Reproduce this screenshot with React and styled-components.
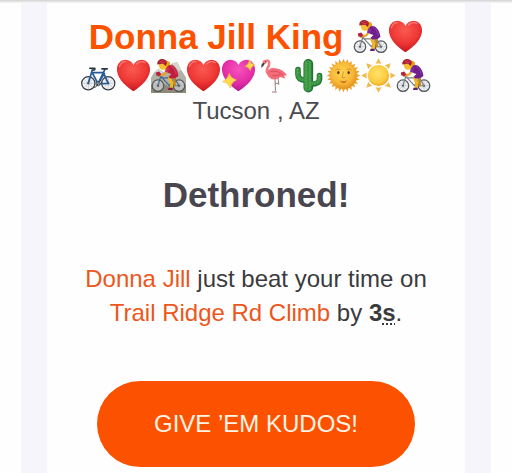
import React from 'react';
import styled, { createGlobalStyle } from 'styled-components';

const GlobalStyle = createGlobalStyle`
	body {
		margin: 0;
		background: #fefefe;
		font-family: 'Liberation Sans', Arial, sans-serif;
	}
`;

const Emoji = ({ label, children }) => (
	<EmojiSvg viewBox='0 0 36 36' role='img' aria-label={label}>
		{children}
	</EmojiSvg>
);

const heartPath =
	'M18 34.2C14 31.5 1 22.6 1 11.7C1 5.8 5 1.8 9.8 1.8C13.6 1.8 16.6 4 18 7.2C19.4 4 22.4 1.8 26.2 1.8C31 1.8 35 5.8 35 11.7C35 22.6 22 31.5 18 34.2Z';

const Heart = () => (
	<Emoji label='red heart'>
		<defs>
			<radialGradient id='heart' cx='0.48' cy='0.3' r='0.68'>
				<stop offset='0' stopColor='#fb5a50' />
				<stop offset='0.6' stopColor='#ee3835' />
				<stop offset='1' stopColor='#c91820' />
			</radialGradient>
		</defs>
		<path d={heartPath} fill='url(#heart)' />
		<path d='M3.5 9C4.5 5.2 7 3.6 10 3.7M21 6.2C23 3.8 27 3 30 4.8' stroke='#ff9a90' strokeWidth='1.2' strokeLinecap='round' fill='none' opacity='0.7' />
	</Emoji>
);

const SparkHeart = () => (
	<Emoji label='sparkling heart'>
		<defs>
			<radialGradient id='pinkHeart' cx='0.5' cy='0.3' r='0.68'>
				<stop offset='0' stopColor='#f653bd' />
				<stop offset='0.65' stopColor='#e32da5' />
				<stop offset='1' stopColor='#b9189b' />
			</radialGradient>
		</defs>
		<path d={heartPath} fill='url(#pinkHeart)' />
		<path d='M8.5 15.5Q10 21 16 22.5Q11 24.5 9.5 31Q7.5 25.5 1.5 24.5Q7 22 8.5 15.5Z' fill='#ffd84e' stroke='#f6b53d' strokeWidth='0.5' />
		<path d='M29.3 2Q30.5 6 35 7Q31 8.5 30.2 13Q28.5 9.2 24.5 8.5Q28.5 6.7 29.3 2Z' fill='#ffd84e' stroke='#f6b53d' strokeWidth='0.5' />
	</Emoji>
);

const Wheel = ({ x, y, r, rim }) => (
	<g>
		<circle cx={x} cy={y} r={r} fill='#e9edf0' fillOpacity='0.6' stroke={rim} strokeWidth='1.3' />
		<path
			d={`M${x - r} ${y}H${x + r}M${x} ${y - r}V${y + r}M${x - 4} ${y - 4}L${x + 4} ${y + 4}M${x - 4} ${y + 4}L${x + 4} ${y - 4}`}
			stroke='#929aa2'
			strokeWidth='0.45'
		/>
		<circle cx={x} cy={y} r='1.1' fill='#4c5158' />
	</g>
);

const Bicycle = () => (
	<Emoji label='bicycle'>
		<Wheel x={7.5} y={26} r={6.8} rim='#343b43' />
		<Wheel x={28} y={26} r={6.8} rim='#343b43' />
		<g fill='none' stroke='#285b96' strokeWidth='1.8' strokeLinecap='round' strokeLinejoin='round'>
			<path d='M28 26L23 15H11.5L17.5 26.5L24 16M17.5 26.5L28 26M7.5 26L12 11' />
			<path d='M17.5 26.5L24.5 12' />
		</g>
		<path d='M9 10.5H14Q15 12 13 12.5M21.5 11.2H27' fill='none' stroke='#31363c' strokeWidth='1.7' strokeLinecap='round' />
		<circle cx='17.5' cy='26.5' r='2.2' fill='#89919a' stroke='#333b43' strokeWidth='0.7' />
		<path d='M17.5 26.5L15 30H13.3' fill='none' stroke='#333b43' strokeWidth='1' />
	</Emoji>
);

const Cyclist = ({ mountain }) => (
	<Emoji label={mountain ? 'woman mountain biking' : 'woman biking'}>
		{mountain && (
			<g>
				<path d='M0 36V20L4 14L8 11L13 15L21 6L27 4L31 12L36 20V36Z' fill='#b3b0a6' />
				<path d='M22 6L27 4L31 12L29 14L26 10ZM4 14L8 11L12 15L8 19Z' fill='#d8d6cf' />
				<path d='M0 27L8 24L18 29L27 24L36 28V36H0Z' fill='#8f8a78' />
			</g>
		)}
		<Wheel x={7.2} y={28.5} r={5.9} rim='#50545b' />
		<Wheel x={28.8} y={28.5} r={5.9} rim='#50545b' />
		<path
			d='M7.2 28.5L10 19L19 28.5L24 20L28.8 28.5H19M10.5 20.5H23M7 18.5H12'
			fill='none'
			stroke={mountain ? '#42688b' : '#7b7e85'}
			strokeWidth='1.2'
		/>
		<path d='M24 18L24 25L25 29' fill='none' stroke='#c98618' strokeWidth='2.4' strokeLinejoin='round' />
		<path d='M22.5 17.5L19.2 20.5L21.5 26L20.8 31' fill='none' stroke='#f3b625' strokeWidth='3.2' strokeLinejoin='round' />
		<path d='M13 3Q17 1.5 19.5 4.5Q20.5 8 18.5 12L15.5 13L13.5 10Z' fill='#e6a11f' />
		<path d='M8 6H14.5L15.5 9.5Q14.5 12.5 11.5 12Q8.8 11.5 8.3 9Z' fill='#f9bf32' />
		<path d='M17 8.5Q20 6 23.5 8.5Q27.5 12 28.2 18.5Q25 21.5 20 21L18 19.5L21 16.5Q17 15.5 15.5 12.5Z' fill={mountain ? '#c01e40' : '#70208c'} />
		<path d='M20 8Q25 10 26 17' fill='none' stroke={mountain ? '#df4059' : '#913cab'} strokeWidth='1' />
		<path d='M16.5 13L13.5 17L8.5 18' fill='none' stroke='#e7a322' strokeWidth='2.2' strokeLinecap='round' strokeLinejoin='round' />
		<path d='M17.5 10L15.8 14.5' stroke={mountain ? '#d9304e' : '#842ba2'} strokeWidth='3.2' />
		<path d='M6.5 6.8Q6 2.2 10.5 1Q15.5 0.5 16.5 5L15 8.2L12.5 6Z' fill='#a81d2c' />
		<path d='M8.5 4L13 2.3M9.5 5.3L14.8 4' stroke='#e2545c' strokeWidth='0.7' />
		<path d='M5 15L8.5 14L10.5 16.5L9 18.5L5.5 18Z' fill='#b7203e' />
		<path d='M18 30.5H22.3V33H17.5Z' fill={mountain ? '#8c1737' : '#601e72'} />
	</Emoji>
);

const Flamingo = () => (
	<Emoji label='flamingo'>
		<path d='M19.5 20L20 34M22.5 20L23.5 27L19.8 25.5M16.5 35H21.5' fill='none' stroke='#8d6466' strokeWidth='0.9' />
		<path d='M8.5 4.5Q12.5 0.5 13.5 4.5Q14 8 11.5 11Q10 16 15 17' fill='none' stroke='#f27a83' strokeWidth='2.6' strokeLinecap='round' />
		<path d='M11 15Q13 9.5 20 10.5Q28 11.5 32 18L29 18L30 21L25 19.5Q18 25 12.5 19Z' fill='#f36d79' />
		<path d='M15 14Q22 12 28 18M17 18Q22 19 25 17' fill='none' stroke='#d94b60' strokeWidth='1' />
		<path d='M6.5 3.5Q8.5 0.8 11.5 2.5L10.5 6L7.5 6.5Z' fill='#f58a8e' />
		<path d='M8 4.5Q5 5.5 5.5 10Q8 8.5 9 6Z' fill='#4b4142' />
		<circle cx='9.8' cy='3.8' r='0.6' fill='#382c2d' />
	</Emoji>
);

const Cactus = () => (
	<Emoji label='cactus'>
		<g fill='none' strokeLinecap='round' strokeLinejoin='round'>
			<path d='M7.2 12V17Q7.2 23 16 23M29.3 18V22Q29 27 20 27' stroke='#207238' strokeWidth='5.8' />
			<path d='M17.8 6V30.5' stroke='#207238' strokeWidth='10' />
			<path d='M7 12V17Q7 22 14 22.5M29 18V22Q29 26 21 26' stroke='#3f9a45' strokeWidth='3.8' />
			<path d='M17.3 6V30.5' stroke='#3f9a45' strokeWidth='7.4' />
			<path d='M15.5 5V32M19.5 4V32M7 12V17M29 18V22' stroke='#7fc45d' strokeWidth='0.7' strokeDasharray='0.5 2.5' />
			<path d='M17.8 4V32' stroke='#24783a' strokeWidth='0.6' strokeDasharray='1 2' />
		</g>
	</Emoji>
);

const angles = count => Array.from({ length: count }, (_, i) => (i * 360) / count);

const SunFace = () => (
	<Emoji label='sun with face'>
		<defs>
			<radialGradient id='face' cx='0.45' cy='0.4' r='0.62'>
				<stop offset='0' stopColor='#ffd552' />
				<stop offset='0.65' stopColor='#f8b838' />
				<stop offset='1' stopColor='#e3901c' />
			</radialGradient>
		</defs>
		{angles(24).map(a => (
			<path key={a} d='M16 5.5L18 0.8L20.2 5.5Z' fill='#f0a32a' transform={`rotate(${a} 18 18)`} />
		))}
		<circle cx='18' cy='18' r='13.7' fill='url(#face)' />
		<ellipse cx='12.7' cy='15' rx='1.2' ry='1.6' fill='#5c3513' />
		<ellipse cx='23.3' cy='15' rx='1.2' ry='1.6' fill='#5c3513' />
		<path d='M9.7 12.5Q12 10 15 12.3M21 12.3Q24 10 26.3 12.5M18 14L16.5 20Q18 21 19.5 20' fill='none' stroke='#d98b19' strokeWidth='0.9' />
		<path d='M14 23.2Q18 24.5 22 23.2Q20 26 18 26Q16 26 14 23.2Z' fill='#cf7424' />
	</Emoji>
);

const Sun = () => (
	<Emoji label='sun'>
		<defs>
			<radialGradient id='sun' cx='0.45' cy='0.4' r='0.62'>
				<stop offset='0' stopColor='#ffe36c' />
				<stop offset='0.7' stopColor='#fbcb3e' />
				<stop offset='1' stopColor='#e9a42a' />
			</radialGradient>
		</defs>
		{angles(8).map(a => (
			<path key={a} d='M15 6L18 0.3L21 6Q18 5 15 6Z' fill='#f2b848' transform={`rotate(${a} 18 18)`} />
		))}
		<circle cx='18' cy='18' r='10.9' fill='url(#sun)' />
	</Emoji>
);

export default function App() {
	return (
		<Page>
			<GlobalStyle />
			<TopEdge />
			<Backdrop>
				<Card>
					<Name>
						Donna Jill King <Cyclist />
						<Heart />
						<Bicycle />
						<Heart />
						<Cyclist mountain />
						<Heart />
						<SparkHeart />
						<Flamingo />
						<Cactus />
						<SunFace />
						<Sun />
						<Cyclist />
					</Name>
					<Location>Tucson , AZ</Location>
					<Title>Dethroned!</Title>
					<Message>
						<TextLink href='#athlete'>Donna Jill</TextLink> just beat your time on{' '}
						<TextLink href='#segment'>Trail Ridge Rd Climb</TextLink> by{' '}
						<strong>
							3<Unit title='seconds'>s</Unit>
						</strong>
						.
					</Message>
					<KudosButton type='button'>GIVE ’EM KUDOS!</KudosButton>
				</Card>
			</Backdrop>
		</Page>
	);
}

const Page = styled.div`
	display: flex;
	flex-direction: column;
	min-height: 100vh;
`;

const TopEdge = styled.div`
	height: 3px;
	background: linear-gradient(#d2d2d2, #f8f8f9);
`;

const Backdrop = styled.main`
	display: flex;
	flex: 1;
	margin: 0 21px;
	padding: 0 26px;
	background: #f5f5fb;
`;

const Card = styled.section`
	display: flex;
	flex: 1;
	flex-direction: column;
	align-items: center;
	padding: 14px 33px 0;
	background: #fefefe;
	text-align: center;
`;

const Name = styled.h1`
	margin: 0;
	font-size: 35px;
	line-height: 39px;
	color: #fc5200;
`;

const EmojiSvg = styled.svg`
	width: 35px;
	height: 35px;
	vertical-align: -5px;
`;

const Location = styled.p`
	margin: 0;
	font-size: 24px;
	line-height: 32px;
	color: #4a4a50;
`;

const Title = styled.h2`
	margin: 48px 0;
	font-size: 35px;
	line-height: 39px;
	color: #494650;
`;

const Message = styled.p`
	margin: 0 0 51px;
	font-size: 24px;
	line-height: 34px;
	color: #3b3b3e;
`;

const TextLink = styled.a`
	color: #ec571c;
	text-decoration: none;
`;

const Unit = styled.abbr`
	text-decoration: underline dotted 2px;
	text-underline-offset: 2px;
`;

const KudosButton = styled.button`
	padding: 28px 57px;
	border: 0;
	border-radius: 43px;
	background: #fc5200;
	color: #fff3e6;
	font-family: inherit;
	font-size: 24px;
	line-height: 30px;
	white-space: nowrap;
	cursor: pointer;
`;
